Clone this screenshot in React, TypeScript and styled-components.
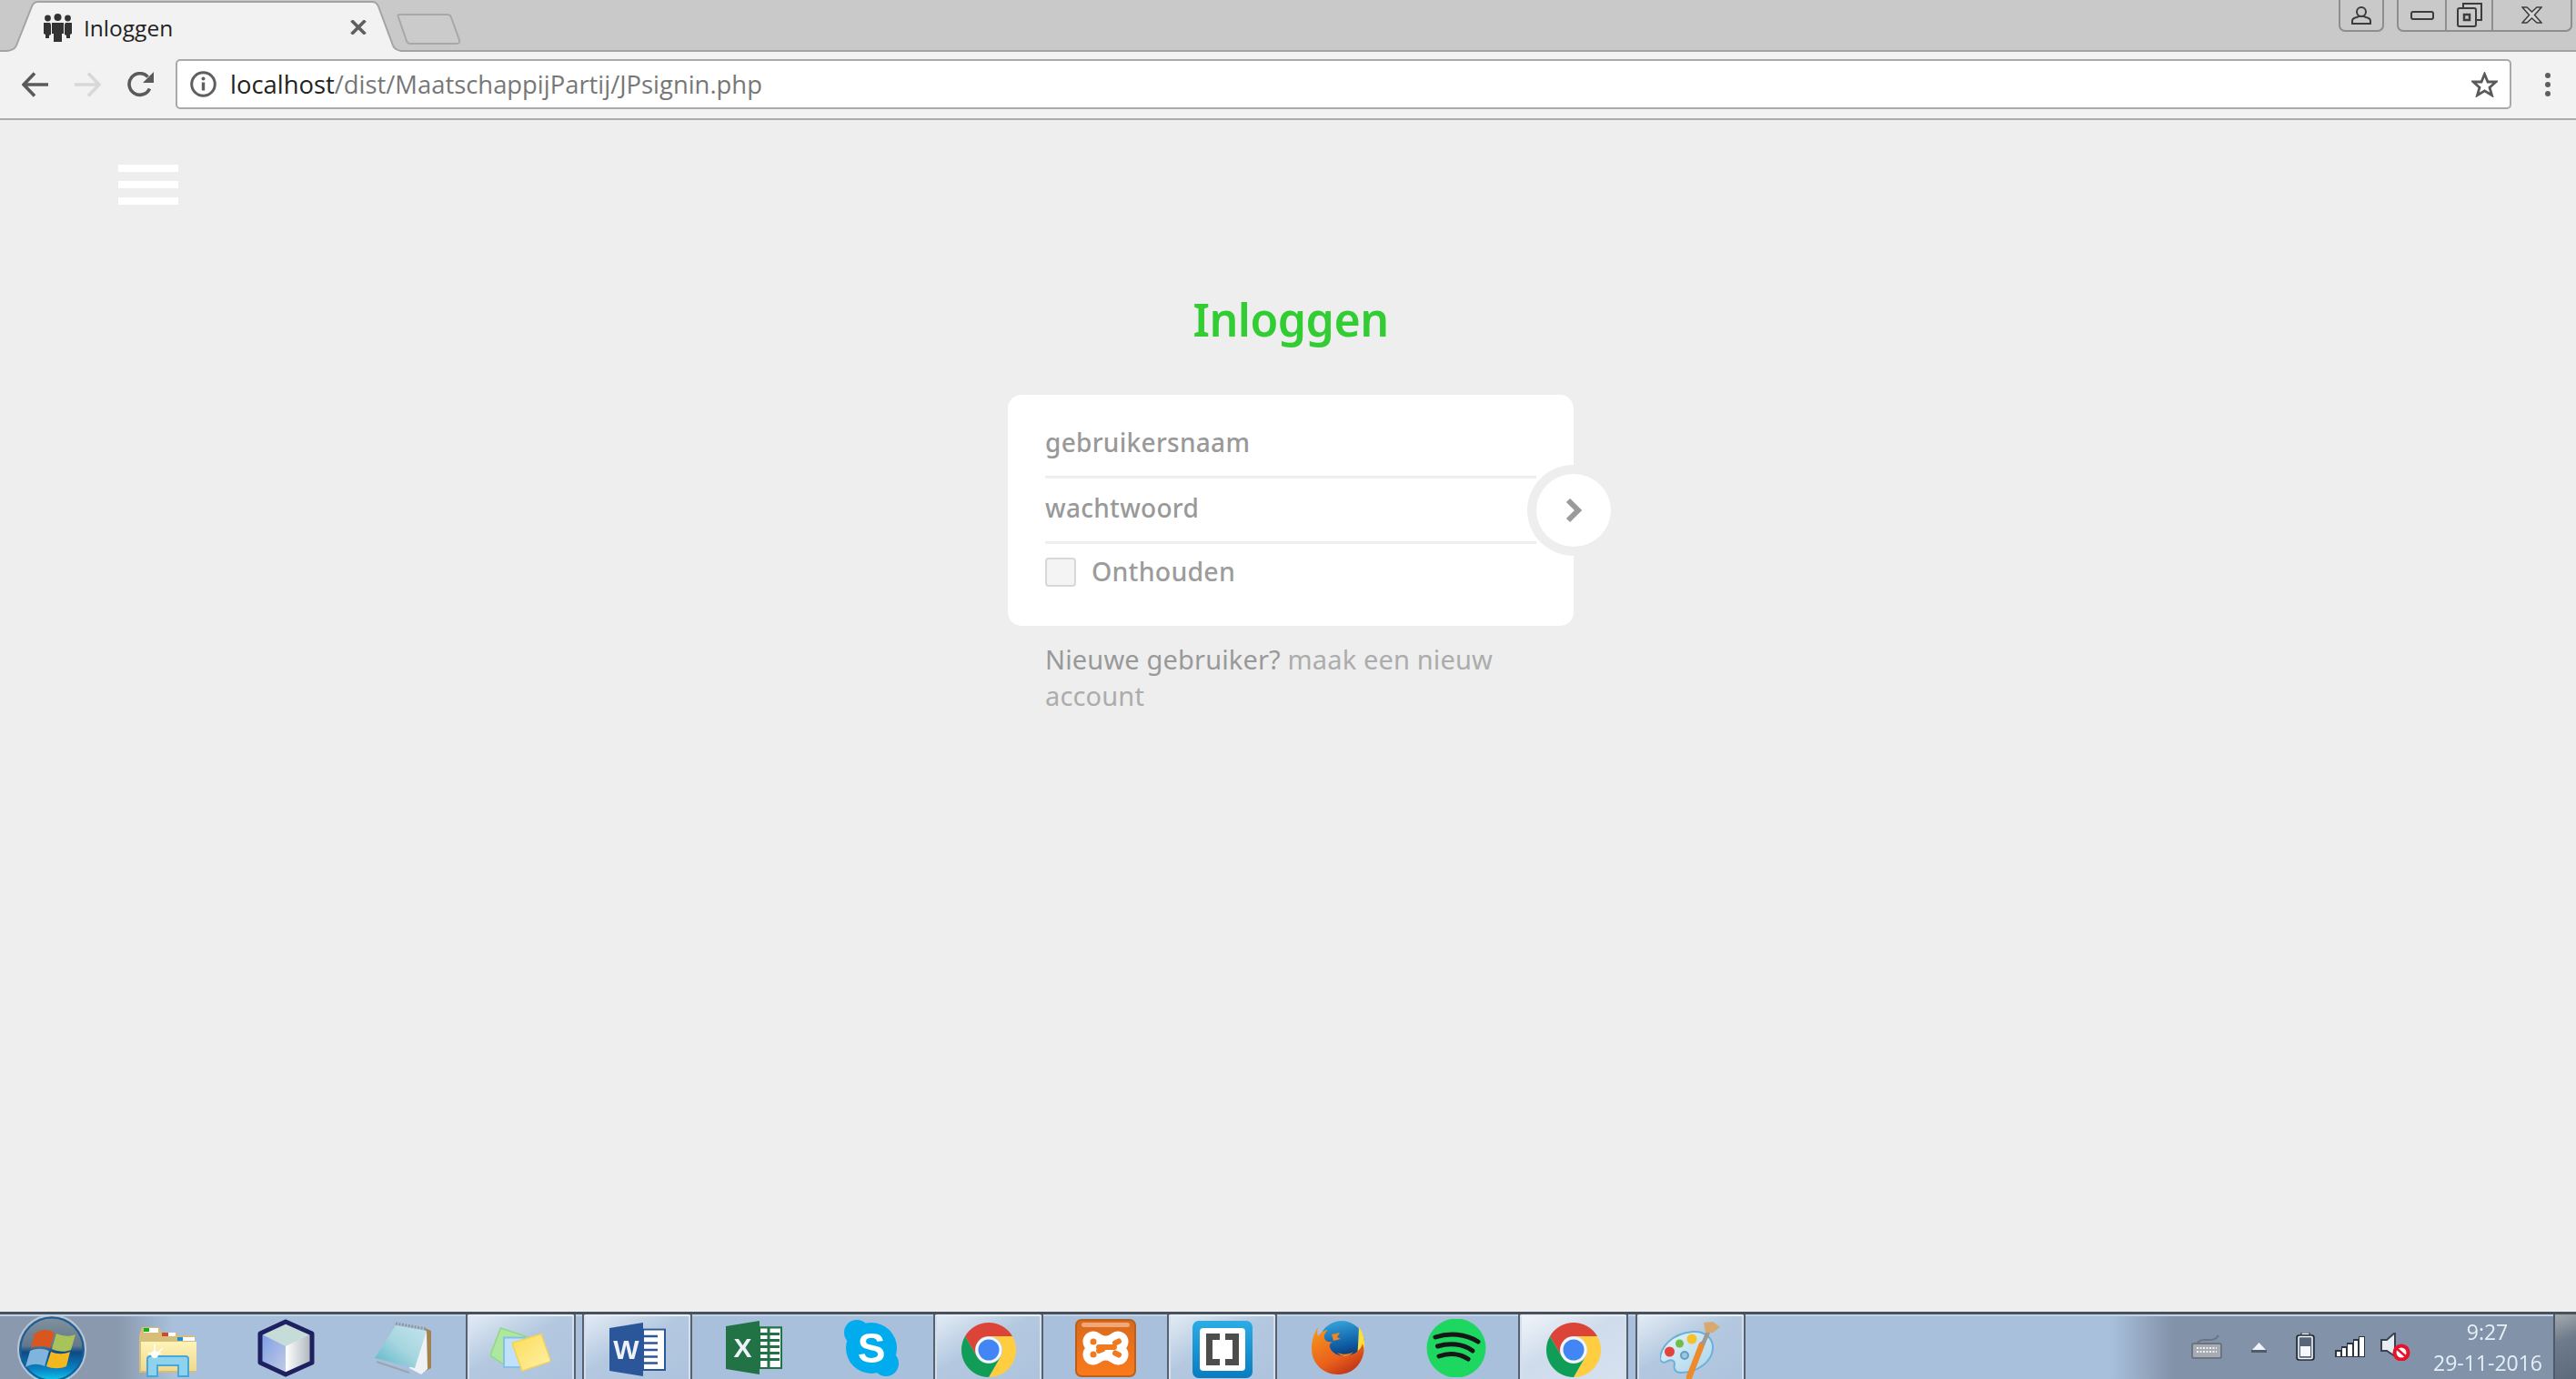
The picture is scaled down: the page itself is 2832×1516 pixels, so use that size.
import styled, { createGlobalStyle } from "styled-components";

const GlobalStyle = createGlobalStyle`
  html, body {
    margin: 0;
    padding: 0;
    height: 100%;
    background: #eeeeee;
  }
  #root {
    height: 100%;
  }
  * {
    box-sizing: border-box;
  }
`;

const Desktop = styled.div`
  width: 2832px;
  height: 1516px;
  display: flex;
  flex-direction: column;
  overflow: hidden;
  font-family: "Open Sans", "Liberation Sans", sans-serif;
  filter: blur(0.5px);
`;

/* browser chrome */
const TabStrip = styled.div`
  height: 57px;
  flex: none;
  display: flex;
  background: #c9c9c9;
  border-bottom: 2px solid #a3a3a3;
`;

const Tab = styled.div`
  position: relative;
  width: 440px;
  height: 57px;
  flex: none;
  display: flex;
  align-items: center;
  padding: 3px 0 0 47px;
`;

const TabShape = styled.svg`
  position: absolute;
  left: 0;
  top: 0;
`;

const TabFavicon = styled.svg`
  position: relative;
  flex: none;
`;

const TabTitle = styled.span`
  position: relative;
  margin-left: 12px;
  font-size: 24.5px;
  color: #222;
  width: 293px;
`;

const TabClose = styled.svg`
  position: relative;
  flex: none;
`;

const NewTab = styled.svg`
  flex: none;
  margin-left: -5px;
`;

const WindowControls = styled.div`
  margin-left: auto;
  margin-right: 4px;
  display: flex;
  gap: 14px;
  align-items: flex-start;
`;

const ControlGroup = styled.div`
  height: 35px;
  display: flex;
  border: 2px solid #8e8e8e;
  border-top: 0;
  border-radius: 0 0 7px 7px;
`;

const ControlButton = styled.div<{ $w: number; $divider?: boolean }>`
  width: ${(p) => p.$w}px;
  display: flex;
  align-items: center;
  justify-content: center;
  border-left: ${(p) => (p.$divider ? "2px solid #8e8e8e" : "0")};
`;

const Toolbar = styled.div`
  height: 75px;
  flex: none;
  display: flex;
  align-items: center;
  gap: 29px;
  padding-left: 24px;
  padding-bottom: 2px;
  background: #f2f2f2;
  border-bottom: 2px solid #ababab;
`;

const Omnibox = styled.div`
  flex: 1;
  height: 55px;
  margin-left: -5px;
  display: flex;
  align-items: center;
  gap: 15px;
  padding: 0 13px 0 14px;
  background: #fff;
  border: 2px solid #a9a9a9;
  border-radius: 5px;
`;

const Url = styled.div`
  flex: 1;
  font-size: 27.4px;
  color: #777;
  white-space: nowrap;
`;

const UrlHost = styled.span`
  color: #222;
`;

const MenuDots = styled.svg`
  flex: none;
  margin: 0 28px 0 8px;
`;

/* page */
const Page = styled.main`
  flex: 1;
  display: flex;
  flex-direction: column;
  padding-top: 49px;
  background: #eeeeee;
  font-family: "Noto Sans", "Open Sans", sans-serif;
`;

const Hamburger = styled.div`
  width: 66px;
  margin-left: 130px;
  display: flex;
  flex-direction: column;
  gap: 10px;
`;

const HamburgerBar = styled.div`
  height: 8px;
  background: #fff;
`;

const LoginColumn = styled.section`
  width: 622px;
  margin: 96px 0 0 calc(50% - 308px);
`;

const Title = styled.h1`
  margin: 0 0 53px;
  height: 60px;
  text-align: center;
  font-size: 50px;
  line-height: 60px;
  font-weight: 600;
  letter-spacing: -0.5px;
  color: #32cd32;
`;

const Card = styled.form`
  position: relative;
  height: 254px;
  padding: 20px 41px 0;
  background: #fff;
  border-radius: 15px;
`;

const Field = styled.div`
  height: 72px;
  display: flex;
  align-items: center;
  padding-bottom: 5px;
  border-bottom: 3px solid #eeeeee;
  font-size: 28px;
  font-weight: 500;
  letter-spacing: 0.3px;
  color: #999;
`;

const RememberRow = styled.label`
  display: flex;
  align-items: center;
  gap: 17px;
  padding-top: 12px;
  font-size: 28.5px;
  line-height: 32px;
  font-weight: 500;
  letter-spacing: 0.2px;
  color: #9c9c9c;
`;

const CheckBox = styled.span`
  width: 34px;
  height: 32px;
  flex: none;
  margin-top: 3px;
  background: #f4f4f4;
  border: 2px solid #d8d8d8;
  border-radius: 4px;
`;

const SubmitButton = styled.button`
  position: absolute;
  top: 77px;
  right: -51px;
  width: 102px;
  height: 100px;
  padding: 0;
  display: flex;
  align-items: center;
  justify-content: center;
  background: #fff;
  border: 10px solid #eeeeee;
  border-radius: 50%;
`;

const SignupNote = styled.p`
  margin: 17px 0 0;
  padding: 0 41px;
  font-size: 29px;
  line-height: 40px;
  letter-spacing: 0.15px;
  color: #999;
`;

const SignupLink = styled.a`
  color: #acacac;
`;

/* windows taskbar */
const Taskbar = styled.footer`
  height: 74px;
  flex: none;
  display: flex;
  gap: 7.6px;
  overflow: hidden;
  border-top: 3px solid #48525f;
  box-shadow: inset 0 2px 0 #c3d3e6;
  background: linear-gradient(
    90deg,
    #8a99ae 0,
    #8a99ae 130px,
    #a8c0db 190px,
    #a8c0db 2320px,
    #8292a8 2390px,
    #8292a8 100%
  );
`;

const StartOrb = styled.div`
  width: 118.4px;
  flex: none;
  padding: 2px 0 0 19px;
`;

const TaskButton = styled.div<{ $open?: boolean; $focused?: boolean }>`
  width: 121px;
  flex: none;
  display: flex;
  align-items: center;
  justify-content: center;
  padding-top: 3px;
  ${(p) =>
    p.$open &&
    `
    margin-top: -3px;
    padding-top: 6px;
    border-top: 3px solid #10151c;
    border-left: 2px solid #56606e;
    border-right: 2px solid #56606e;
    border-radius: 4px 4px 0 0;
    box-shadow: inset 0 2px 0 #e8eef6, inset 2px 0 0 #d3dfed, inset -2px 0 0 #d3dfed;
  `}
  ${(p) =>
    p.$open &&
    !p.$focused &&
    "background: linear-gradient(150deg, #e4ecf5 0, #b4c9e0 45%, #adc3dd 100%);"}
  ${(p) =>
    p.$focused &&
    "background: linear-gradient(150deg, #f1f5fa 0, #cfdcec 45%, #d6e1ef 100%);"}
`;

const Tray = styled.div`
  margin-left: auto;
  display: flex;
  align-items: center;
`;

const TrayIcon = styled.svg<{ $gap: number }>`
  flex: none;
  margin-right: ${(p) => p.$gap}px;
`;

const Clock = styled.div`
  width: 119px;
  margin-right: 13px;
  text-align: center;
  font-size: 23px;
  line-height: 34px;
  color: #e6eff8;
  white-space: nowrap;
`;

const ShowDesktop = styled.div`
  width: 25px;
  align-self: stretch;
  border-left: 2px solid #4f5a68;
  background: linear-gradient(160deg, #a5a9ae 0, #6d7b8c 40%, #5c6a7c 100%);
`;

const Favicon = () => (
  <TabFavicon width="33" height="31" viewBox="0 0 33 31" fill="#333">
    <circle cx="5.5" cy="5" r="3.4" />
    <circle cx="27.5" cy="5" r="3.4" />
    <circle cx="16.5" cy="4" r="4" />
    <path d="M1 10h7l1 2v11l-2 1v3H3v-4l-2-1zM25 10h7v12l-2 1v4h-4v-3l-2-1V12z" />
    <path d="M10 10h13v12h-2v9h-9v-9h-2z" />
  </TabFavicon>
);

const BackIcon = ({ color = "#5a5a5a", flip = false }: { color?: string; flip?: boolean }) => (
  <svg width="29" height="28" viewBox="0 0 29 28" fill="none" stroke={color} strokeWidth="3.6">
    <g transform={flip ? "matrix(-1 0 0 1 29 0)" : undefined}>
      <path d="M29 14H3M14 1.5 2 14l12 12.500" />
    </g>
  </svg>
);

const ReloadIcon = () => (
  <svg width="29" height="28" viewBox="0 0 29 28" fill="none">
    <path d="M24.500 18.500A11.800 11.800 0 1 1 22.500 5.500" stroke="#5a5a5a" strokeWidth="3.6" />
    <path d="M29 0v12H17z" fill="#5a5a5a" />
  </svg>
);

const InfoIcon = () => (
  <svg width="29" height="29" viewBox="0 0 29 29" fill="none">
    <circle cx="14.500" cy="14.500" r="12.800" stroke="#5f5f5f" strokeWidth="3" />
    <path d="M14.500 12.500v9" stroke="#5f5f5f" strokeWidth="3.400" />
    <circle cx="14.500" cy="8.500" r="2" fill="#5f5f5f" />
  </svg>
);

const StarIcon = () => (
  <svg width="29" height="28" viewBox="0 0 29 28" fill="none">
    <path d="M14.500 2.500 18 11h9l-7 6.200 2.500 8.500-8-4.900-8 4.900L9 17.200 2 11h9z" stroke="#5a5a5a" strokeWidth="2.800" />
  </svg>
);

const WindowsOrb = () => (
  <svg width="80" height="71" viewBox="0 0 80 71" style={{ display: "block" }}>
    <defs>
      <linearGradient id="orb" x1="0" y1="0" x2="0" y2="1">
        <stop offset="0" stopColor="#83929f" />
        <stop offset="0.45" stopColor="#63798c" />
        <stop offset="0.55" stopColor="#0c4a86" />
        <stop offset="0.8" stopColor="#0a83c4" />
        <stop offset="1" stopColor="#0fd6f5" />
      </linearGradient>
    </defs>
    <circle cx="38" cy="36" r="37" fill="url(#orb)" stroke="#b8c6d6" strokeWidth="2" />
    <circle cx="38" cy="36" r="34.500" fill="none" stroke="#1a5c95" strokeWidth="2" />
    <path d="M19 19c8-5 15-5 22-1l-5 17c-7-3-14-3-21 0z" fill="#d9571f" />
    <path d="M43 19c7 3 14 4 21 1l-5 17c-7 3-14 2-21-1z" fill="#a9c35b" />
    <path d="M14 38c7-3 14-3 21 0l-5 17c-7-3-14-3-21 1z" fill="#7fb4dc" />
    <path d="M37 39c7 3 14 3 21 0l-4 16c-7 3-15 3-22 0z" fill="#f4b81f" />
  </svg>
);

const ExplorerIcon = () => (
  <svg width="66" height="64" viewBox="0 0 66 64">
    <defs>
      <linearGradient id="folder" x1="0" y1="0" x2="0" y2="1">
        <stop offset="0" stopColor="#fdf4b8" />
        <stop offset="1" stopColor="#f0d98f" />
      </linearGradient>
    </defs>
    <path d="M3 9h19l3 6h16l2 3h18v41H0V18z" fill="#d7bd7a" />
    <rect x="5" y="10" width="16" height="5" fill="#fff" />
    <rect x="5" y="10" width="6" height="4" fill="#12b312" />
    <rect x="25" y="15" width="15" height="4" fill="#fff" />
    <rect x="25" y="15" width="7" height="4" fill="#d2492a" />
    <rect x="42" y="20" width="19" height="4" fill="#fff" />
    <rect x="42" y="20" width="6" height="4" fill="#1a8fe0" />
    <rect x="2" y="25" width="61" height="32" fill="url(#folder)" />
    <path d="M9 63V44q0-3 3-3h39q3 0 3 3v19H43V51H20v12z" fill="#8fd2ee" stroke="#49a7d8" strokeWidth="2" />
    <path d="M17 28v14M10 38h14M18 40l8-8" stroke="#fff" strokeWidth="1.500" />
    <circle cx="17" cy="39" r="4" fill="#fff" />
  </svg>
);

const CubeIcon = () => (
  <svg width="64" height="64" viewBox="0 0 64 64">
    <defs>
      <linearGradient id="cubeL" x1="0" y1="0" x2="1" y2="1">
        <stop offset="0" stopColor="#7c9ce4" />
        <stop offset="1" stopColor="#c3cde6" />
      </linearGradient>
      <linearGradient id="cubeR" x1="0" y1="0" x2="1" y2="0">
        <stop offset="0" stopColor="#ffffff" />
        <stop offset="1" stopColor="#a9b3bb" />
      </linearGradient>
    </defs>
    <path d="M31 3 60 16v32L31 61 3 48V16z" fill="#c5dcd8" />
    <path d="M3 16 31 30v31L3 48z" fill="url(#cubeL)" />
    <path d="M60 16 31 30v31l29-13z" fill="url(#cubeR)" />
    <path d="M31 3 60 16v32L31 61 3 48V16z" fill="none" stroke="#1e2160" strokeWidth="5" strokeLinejoin="round" />
  </svg>
);

const NotepadIcon = () => (
  <svg width="64" height="64" viewBox="0 0 64 64">
    <defs>
      <linearGradient id="pad" x1="0" y1="1" x2="1" y2="0">
        <stop offset="0" stopColor="#57b4c9" />
        <stop offset="0.5" stopColor="#a6d6de" />
        <stop offset="1" stopColor="#c5e4f0" />
      </linearGradient>
    </defs>
    <path d="M55 10l7 3v41l-6 3z" fill="#a3834f" />
    <path d="M57 13l1 42-7 6-13-7z" fill="#eef2f4" />
    <path d="M23 7l34 6-13 41L0 43z" fill="url(#pad)" />
    <path d="M23 5l34 6" stroke="#8f979c" strokeWidth="3" strokeDasharray="2 1.500" />
    <path d="M2 47l36 12" stroke="#9aa5ad" strokeWidth="2" />
  </svg>
);

const PapersIcon = () => (
  <svg width="66" height="64" viewBox="-2 0 66 64">
    <defs>
      <linearGradient id="paperY" x1="0" y1="0" x2="1" y2="1">
        <stop offset="0" stopColor="#fcdc58" />
        <stop offset="1" stopColor="#fff1a8" />
      </linearGradient>
    </defs>
    <path d="M9.500 8 39.500 18 14.500 49-2 38z" fill="#aee79f" stroke="#8fd980" strokeWidth="1.500" />
    <rect x="13" y="18.500" width="23" height="32.500" fill="#c0e0fb" stroke="#86bfea" strokeWidth="2" />
    <path d="M22 24.500 54 14.500 64.500 44.500 33 55z" fill="url(#paperY)" stroke="#f2d25a" strokeWidth="1.500" />
  </svg>
);

const OfficeIcon = ({ letter, color, grid }: { letter: string; color: string; grid?: boolean }) => (
  <svg width="64" height="64" viewBox="0 0 64 64">
    <rect x="37" y="8.500" width="26" height="46.500" fill={grid ? color : "#fff"} />
    <rect x="38" y="9.500" width="24" height="44.500" fill="#fff" stroke={color} strokeWidth="2" />
    {grid ? (
      <path
        d="M38 16.500h22M38 23.500h22M38 30.500h22M38 37.500h22M38 44.500h22M48 10v44"
        stroke={color}
        strokeWidth="3"
      />
    ) : (
      <path d="M38 17h16M38 24.500h16M38 32h16M38 39.500h16M38 46.500h16" stroke={color} strokeWidth="2.500" />
    )}
    <path d="M1 8 38 2v59L1 55z" fill={color} />
    <text
      x="19.500"
      y="42"
      textAnchor="middle"
      fontFamily="Liberation Sans, sans-serif"
      fontWeight="700"
      fontSize="30"
      fill="#eef2f8"
    >
      {letter}
    </text>
  </svg>
);

const SkypeIcon = () => (
  <svg width="64" height="64" viewBox="0 0 64 64">
    <circle cx="32" cy="32" r="28" fill="#00aced" />
    <circle cx="16" cy="15" r="14" fill="#00aced" />
    <circle cx="48" cy="49" r="14" fill="#00aced" />
    <text
      x="32"
      y="48"
      textAnchor="middle"
      fontFamily="Liberation Sans, sans-serif"
      fontWeight="700"
      fontSize="46"
      fill="#fff"
    >
      S
    </text>
  </svg>
);

const ChromeIcon = () => (
  <svg width="64" height="64" viewBox="0 0 64 64">
    <path d="M6 17A30 30 0 0 1 58 17H32A15 15 0 0 0 19 39.500Z" fill="#db4437" />
    <path d="M58 17A30 30 0 0 1 32 62L45 39.500A15 15 0 0 0 32 17Z" fill="#ffcd40" />
    <path d="M32 62A30 30 0 0 1 6 17L19 39.500A15 15 0 0 0 45 39.500Z" fill="#0f9d58" />
    <circle cx="32" cy="32" r="14.500" fill="#f4f6f8" />
    <circle cx="32" cy="32" r="11.500" fill="#4285f4" />
  </svg>
);

const XamppIcon = () => (
  <svg width="67" height="64" viewBox="0 0 67 64">
    <defs>
      <linearGradient id="xampp" x1="0" y1="0" x2="0" y2="1">
        <stop offset="0" stopColor="#d9691d" />
        <stop offset="1" stopColor="#fb7a1c" />
      </linearGradient>
    </defs>
    <rect x="1" y="1" width="65" height="62" rx="6" fill="url(#xampp)" stroke="#b9601d" strokeWidth="2" />
    <rect x="7" y="4" width="53" height="5" rx="2.500" fill="#f0a878" />
    <path
      d="M20 25C26 29 28 30 33.500 30S41 29 47 25M20 39C26 35 28 34 33.500 34S41 35 47 39"
      fill="none"
      stroke="#fff"
      strokeWidth="23"
      strokeLinecap="round"
    />
    <path
      d="M26 31h17M44 26.500l4-2M44 37.500l4 2M26 35l4-1.500"
      fill="none"
      stroke="#f07a1f"
      strokeWidth="6"
      strokeLinecap="round"
    />
    <circle cx="20" cy="25" r="3.500" fill="#f07a1f" />
    <circle cx="20" cy="39" r="3.500" fill="#f07a1f" />
  </svg>
);

const BracketsIcon = () => (
  <svg width="66" height="64" viewBox="0 0 66 64">
    <defs>
      <linearGradient id="brackets" x1="0" y1="0" x2="0" y2="1">
        <stop offset="0" stopColor="#2bace4" />
        <stop offset="1" stopColor="#0a7cc2" />
      </linearGradient>
    </defs>
    <rect x="0" y="0" width="66" height="63" rx="7" fill="url(#brackets)" />
    <rect x="8" y="8" width="50" height="47" rx="4" fill="#fff" />
    <path d="M15 14h15v7h-8v21h8v7H15zM51 14H36v7h8v21h-8v7h15z" fill="#4d4d4d" />
  </svg>
);

const FirefoxIcon = () => (
  <svg width="64" height="64" viewBox="0 0 64 64">
    <defs>
      <linearGradient id="ffGlobe" x1="0.3" y1="0" x2="0.5" y2="1">
        <stop offset="0" stopColor="#35a5dc" />
        <stop offset="0.55" stopColor="#0f5ea6" />
        <stop offset="1" stopColor="#0a1f52" />
      </linearGradient>
      <linearGradient id="ffFox" x1="0" y1="0" x2="0.6" y2="1">
        <stop offset="0" stopColor="#f79a1e" />
        <stop offset="0.7" stopColor="#e95f1b" />
        <stop offset="1" stopColor="#c43a17" />
      </linearGradient>
    </defs>
    <circle cx="35" cy="27" r="25" fill="url(#ffGlobe)" />
    <path d="M54 9c7 9 8 23 3 32l-5 3 1-15z" fill="#fbe03c" />
    <path
      d="M9 9c-1 4-1 7 0 10 3-4 7-7 11-7-3 3-5 6-4 9 1 4 5 5 9 4-3 2-4 4-3 6 2 8 14 12 24 8 6-2 10-6 12-12 1 3 2 7 1 11-3 14-14 23-28 23C14 61 2 48 2 33 2 23 5 15 9 9z"
      fill="url(#ffFox)"
    />
    <path d="M24 17l9-2-3 5 4 2-8 2zM30 37c7 3 13 2 18-1-5 6-12 7-18 1z" fill="#ee8422" />
  </svg>
);

const SpotifyIcon = () => (
  <svg width="66" height="64" viewBox="0 0 66 64">
    <circle cx="33" cy="32" r="32.500" fill="#1ed760" />
    <path d="M10 20c15-5 33-4 47 5M12.500 30c13-4 28-3 38.500 5M14 41c11-4 23-3 32 3" fill="none" stroke="#161616" strokeWidth="5" strokeLinecap="round" />
  </svg>
);

const PaletteIcon = () => (
  <svg width="66" height="64" viewBox="0 0 66 64">
    <defs>
      <linearGradient id="pal" x1="0" y1="0" x2="1" y2="1">
        <stop offset="0" stopColor="#e8f4fa" />
        <stop offset="1" stopColor="#a8d4ea" />
      </linearGradient>
    </defs>
    <path
      d="M0 43C0 30 12 14 36 12c14-1 23 8 22 19-1 14-17 26-35 26-8 0-8-6-7-10 0-3-4-5-7-3-3 1-5 4-9-1z"
      fill="url(#pal)"
      stroke="#6bb0d6"
      strokeWidth="2"
    />
    <circle cx="10.500" cy="34" r="5.500" fill="#e2433c" />
    <circle cx="21.500" cy="25" r="4.500" fill="#72bd45" />
    <circle cx="35" cy="20" r="5.500" fill="#f6c22a" />
    <circle cx="27" cy="38" r="4" fill="#9cc5de" stroke="#5f9fc6" strokeWidth="2" />
    <path d="M32 62 46 26" stroke="#ee8a2c" strokeWidth="6.500" strokeLinecap="round" />
    <path d="M47 26l6-14" stroke="#9a9a96" strokeWidth="4.500" />
    <path d="M50 13 48 2l10-1 8 6-8 6z" fill="#d6aa6e" />
  </svg>
);

const KeyboardIcon = () => (
  <TrayIcon $gap={32} width="34" height="27" viewBox="0 0 34 27" fill="none">
    <path d="M6 10c4-5 7-4 12-4 5 0 9 0 12-5" stroke="#6a7483" strokeWidth="2" />
    <rect x="1" y="10" width="32" height="16" rx="2" fill="#a6abb2" stroke="#6a7483" strokeWidth="2" />
    <path d="M6 15h22M6 19h22" stroke="#eef0f2" strokeWidth="2" strokeDasharray="2 1.500" />
  </TrayIcon>
);

const CaretIcon = () => (
  <TrayIcon $gap={32} width="17" height="12" viewBox="0 0 17 12">
    <path d="M8.500 1 16 9H1z" fill="#f1f5fa" />
    <rect x="0" y="9" width="17" height="3" fill="#4d5b6d" />
  </TrayIcon>
);

const BatteryIcon = () => (
  <TrayIcon $gap={22} width="21" height="31" viewBox="0 0 21 31">
    <rect x="6" y="0" width="9" height="3" fill="#f5f7fa" stroke="#1e2835" strokeWidth="1" />
    <rect x="1" y="3" width="19" height="27" rx="2.500" fill="#566578" stroke="#1e2835" strokeWidth="1.500" />
    <rect x="3" y="4.500" width="15" height="24" rx="1" fill="none" stroke="#f5f7fa" strokeWidth="1.500" />
    <rect x="5" y="15" width="11" height="11" fill="#f5f7fa" />
  </TrayIcon>
);

const SignalIcon = () => (
  <TrayIcon $gap={17} width="33" height="23" viewBox="0 0 33 23">
    <path d="M0 15h7v8H0zM7 11h6v12H7zM13 7h7v16h-7zM20 3h6v20h-6zM26 0h7v23h-7z" fill="#2a3543" />
    <path d="M2 17h4v5H2zM8 13h4v9H8zM14 9h5v13h-5zM21 5h4v17h-4zM27 1h5v21h-5z" fill="#fff" />
  </TrayIcon>
);

const SpeakerIcon = () => (
  <TrayIcon $gap={24} width="34" height="31" viewBox="0 0 34 31">
    <path d="M1 8h6l9-8v26L7 20H1z" fill="#e9eef4" stroke="#39434f" strokeWidth="2" />
    <circle cx="23" cy="22" r="9.500" fill="#e8102a" />
    <circle cx="23" cy="22" r="5.500" fill="#fff" />
    <path d="M18.500 18 27.500 26" stroke="#e8102a" strokeWidth="2.500" />
  </TrayIcon>
);

export default function App() {
  return (
    <Desktop>
      <GlobalStyle />
      <TabStrip>
        <Tab>
          <TabShape width="440" height="57" viewBox="0 0 440 57">
            <path
              d="M0 56H8Q16 55 18 50L35 7Q37 2 42 2H409Q414 2 416 7L432 50Q434 55 441 56V58H0Z"
              fill="#f2f2f2"
              stroke="#a3a3a3"
              strokeWidth="2"
            />
          </TabShape>
          <Favicon />
          <TabTitle>Inloggen</TabTitle>
          <TabClose width="18" height="16" viewBox="0 0 18 16">
            <path d="M1.500 0.500 16.500 15.500M16.500 0.500 1.500 15.500" stroke="#5f5f5f" strokeWidth="3.600" />
          </TabClose>
        </Tab>
        <NewTab width="72" height="55" viewBox="0 0 72 55">
          <path
            d="M3 19Q1 16 5 16H57Q60 16 61 19L70 44Q71 48 67 48H16Q13 48 12 45Z"
            fill="#cbcbcb"
            stroke="#a8a8a8"
            strokeWidth="2"
          />
        </NewTab>
        <WindowControls>
          <ControlGroup>
            <ControlButton $w={46}>
              <svg width="22" height="20" viewBox="0 0 22 20" fill="none" stroke="#3c3c3c" strokeWidth="2">
                <circle cx="11" cy="6" r="5" />
                <path d="M1 19v-3q0-3 5-4l2-1h6l2 1q5 1 5 4v3z" />
              </svg>
            </ControlButton>
          </ControlGroup>
          <ControlGroup>
            <ControlButton $w={51}>
              <svg width="26" height="10" viewBox="0 0 26 10" fill="none" stroke="#3c3c3c" strokeWidth="2">
                <rect x="1" y="1" width="24" height="8" rx="2" />
              </svg>
            </ControlButton>
            <ControlButton $w={51} $divider>
              <svg width="28" height="27" viewBox="0 0 28 27" fill="none" stroke="#3c3c3c" strokeWidth="2">
                <path d="M7 6V1h20v18h-6" />
                <rect x="1" y="6" width="20" height="20" rx="2" />
                <rect x="8" y="13" width="6" height="6" strokeWidth="2.500" />
              </svg>
            </ControlButton>
            <ControlButton $w={87} $divider>
              <svg width="23" height="19" viewBox="0 0 23 19" fill="#d5d5d5" stroke="#3c3c3c" strokeWidth="1.500">
                <path d="M1 1h5l5.500 5L17 1h5l-7.500 8.500L22 18h-5l-5.500-5L6 18H1l7.500-8.500z" />
              </svg>
            </ControlButton>
          </ControlGroup>
        </WindowControls>
      </TabStrip>

      <Toolbar>
        <BackIcon />
        <BackIcon color="#d8d8d8" flip />
        <ReloadIcon />
        <Omnibox>
          <InfoIcon />
          <Url>
            <UrlHost>localhost</UrlHost>/dist/MaatschappijPartij/JPsignin.php
          </Url>
          <StarIcon />
        </Omnibox>
        <MenuDots width="6" height="26" viewBox="0 0 6 26" fill="#5f5f5f">
          <circle cx="3" cy="3" r="3" />
          <circle cx="3" cy="13" r="3" />
          <circle cx="3" cy="23" r="3" />
        </MenuDots>
      </Toolbar>

      <Page>
        <Hamburger>
          <HamburgerBar />
          <HamburgerBar />
          <HamburgerBar />
        </Hamburger>
        <LoginColumn>
          <Title>Inloggen</Title>
          <Card>
            <Field>gebruikersnaam</Field>
            <Field>wachtwoord</Field>
            <RememberRow>
              <CheckBox />
              Onthouden
            </RememberRow>
            <SubmitButton type="button">
              <svg width="20" height="28" viewBox="0 0 20 28" fill="none" stroke="#9a9a9a" strokeWidth="6">
                <path d="M4 3 15 14 4 25" />
              </svg>
            </SubmitButton>
          </Card>
          <SignupNote>
            Nieuwe gebruiker? <SignupLink>maak een nieuw</SignupLink> <SignupLink>account</SignupLink>
          </SignupNote>
        </LoginColumn>
      </Page>

      <Taskbar>
        <StartOrb>
          <WindowsOrb />
        </StartOrb>
        <TaskButton>
          <ExplorerIcon />
        </TaskButton>
        <TaskButton>
          <CubeIcon />
        </TaskButton>
        <TaskButton>
          <NotepadIcon />
        </TaskButton>
        <TaskButton $open>
          <PapersIcon />
        </TaskButton>
        <TaskButton $open>
          <OfficeIcon letter="W" color="#2b579a" />
        </TaskButton>
        <TaskButton>
          <OfficeIcon letter="X" color="#217346" grid />
        </TaskButton>
        <TaskButton>
          <SkypeIcon />
        </TaskButton>
        <TaskButton $open>
          <ChromeIcon />
        </TaskButton>
        <TaskButton>
          <XamppIcon />
        </TaskButton>
        <TaskButton $open>
          <BracketsIcon />
        </TaskButton>
        <TaskButton>
          <FirefoxIcon />
        </TaskButton>
        <TaskButton>
          <SpotifyIcon />
        </TaskButton>
        <TaskButton $open $focused>
          <ChromeIcon />
        </TaskButton>
        <TaskButton $open>
          <PaletteIcon />
        </TaskButton>
        <Tray>
          <KeyboardIcon />
          <CaretIcon />
          <BatteryIcon />
          <SignalIcon />
          <SpeakerIcon />
          <Clock>
            9:27
            <br />
            29-11-2016
          </Clock>
          <ShowDesktop />
        </Tray>
      </Taskbar>
    </Desktop>
  );
}
